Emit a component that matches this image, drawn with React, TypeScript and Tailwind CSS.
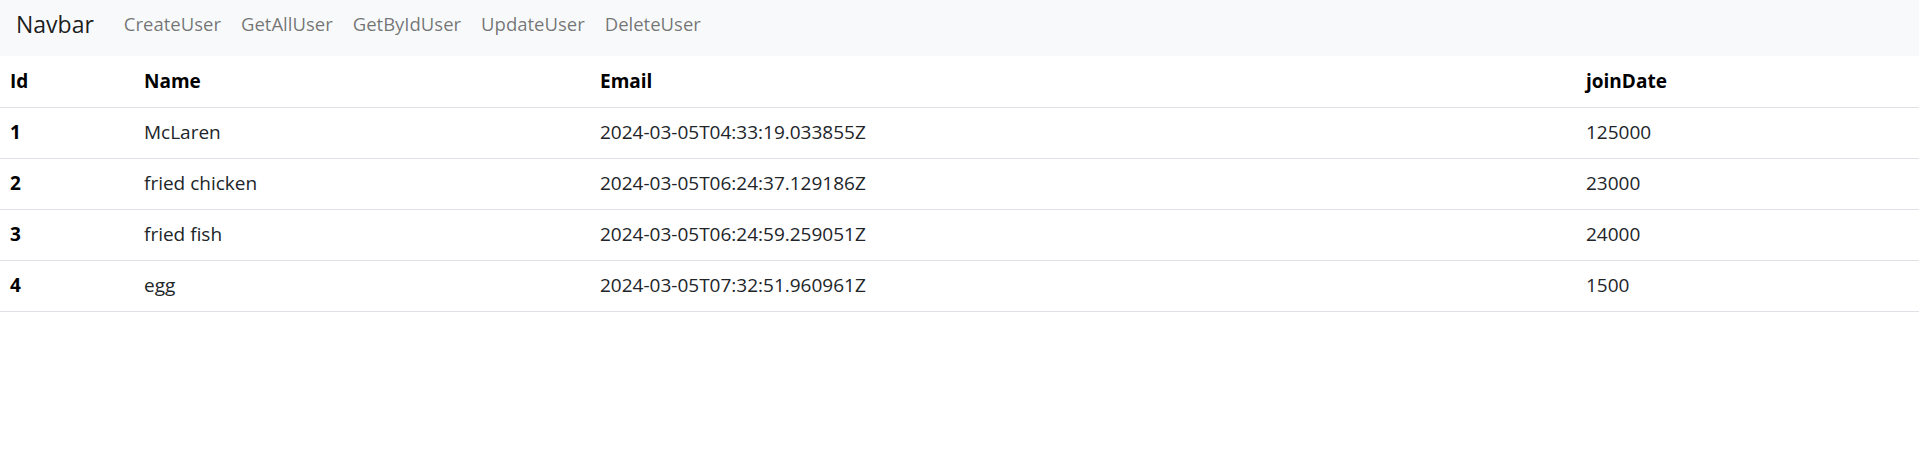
const users = [
  { id: 1, name: "McLaren", email: "2024-03-05T04:33:19.033855Z", joinDate: "125000" },
  { id: 2, name: "fried chicken", email: "2024-03-05T06:24:37.129186Z", joinDate: "23000" },
  { id: 3, name: "fried fish", email: "2024-03-05T06:24:59.259051Z", joinDate: "24000" },
  { id: 4, name: "egg", email: "2024-03-05T07:32:51.960961Z", joinDate: "1500" },
];

const links = ["CreateUser", "GetAllUser", "GetByIdUser", "UpdateUser", "DeleteUser"];

export default function App() {
  return (
    <div className="min-h-[459px] bg-white font-['Open_Sans',sans-serif] text-[#212529]">
      <nav className="flex h-[56px] items-center bg-[#f8f9fa] px-[16px] pb-[8px]">
        <a className="mr-[30px] text-[23px] text-black/90">Navbar</a>
        <div className="flex gap-[20px] text-[18.5px] text-black/55">
          {links.map((l) => (
            <a key={l}>{l}</a>
          ))}
        </div>
      </nav>

      <table className="w-full table-fixed border-collapse text-left text-[19px]">
        <colgroup>
          <col className="w-[134px]" />
          <col className="w-[456px]" />
          <col className="w-[986px]" />
          <col />
        </colgroup>
        <thead>
          <tr className="h-[51px] border-b border-[#dee2e6] font-bold text-black">
            <th className="px-[10px]">Id</th>
            <th className="px-[10px]">Name</th>
            <th className="px-[10px]">Email</th>
            <th className="px-[10px]">joinDate</th>
          </tr>
        </thead>
        <tbody>
          {users.map((u) => (
            <tr key={u.id} className="h-[51px] border-b border-[#dee2e6]">
              <th className="px-[10px] font-bold text-black">{u.id}</th>
              <td className="px-[10px]">{u.name}</td>
              <td className="px-[10px]">{u.email}</td>
              <td className="px-[10px]">{u.joinDate}</td>
            </tr>
          ))}
        </tbody>
      </table>
    </div>
  );
}
